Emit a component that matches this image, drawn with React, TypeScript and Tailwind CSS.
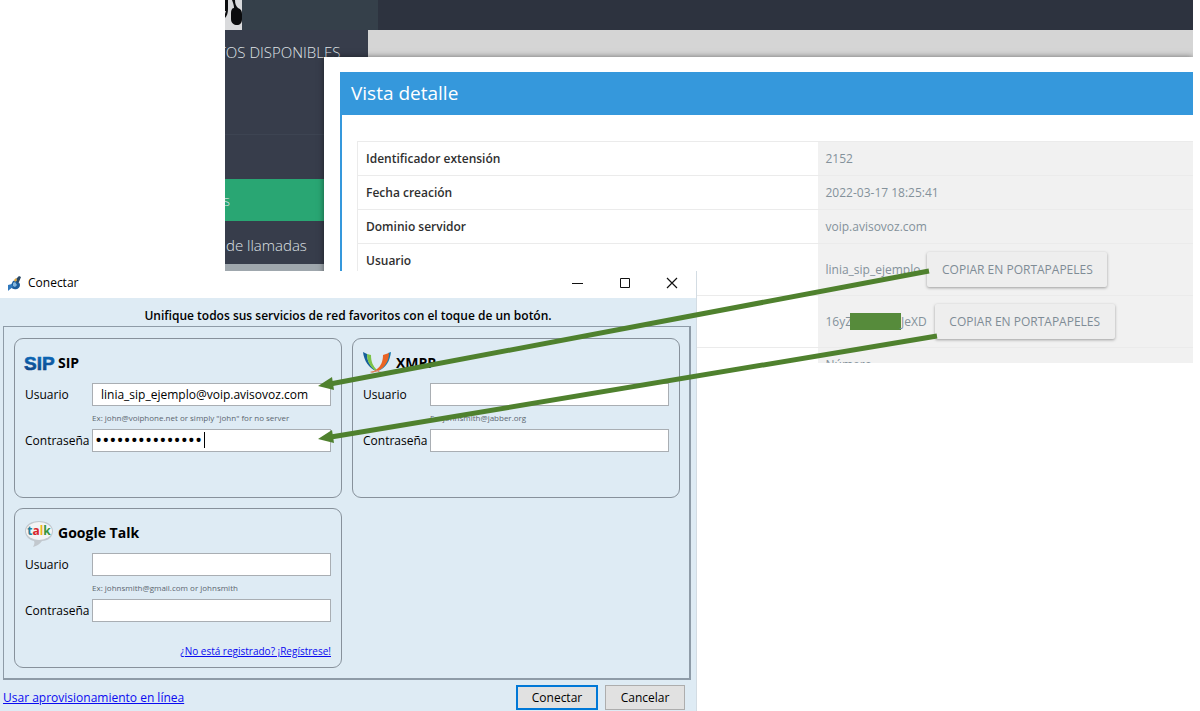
import React from 'react';

interface AccountProps {
  id: string;
  title: string;
  icon: React.ReactNode;
  hint: string;
  user?: string;
  password?: string;
  children?: React.ReactNode;
}

const inputClass = 'block w-full h-[23px] border border-[#a9aeb3] bg-white text-black focus:outline-none';

const Account: React.FC<AccountProps> = ({ id, title, icon, hint, user = '', password = '', children }) => (
  <section className="h-[160px] rounded-[9px] border border-[#87919b] px-[10px] pt-[10px]">
    <h2 className="flex h-[28px] items-center gap-[5px] text-sm font-bold">
      {icon}
      {title}
    </h2>
    <div className="mt-[6px] grid grid-cols-[67px_1fr] items-center">
      <label htmlFor={`${id}-user`}>Usuario</label>
      <input id={`${id}-user`} type="text" defaultValue={user} className={`${inputClass} px-2`} />
      <p className="col-start-2 h-[23px] pt-1 text-[8px] leading-4 text-[#5c6670]">{hint}</p>
      <label htmlFor={`${id}-pass`}>Contraseña</label>
      <div className="relative">
        <input id={`${id}-pass`} type="password" defaultValue={password} className={`${inputClass} px-[2px] text-[19px]`} />
        {password && <span className="absolute left-[112px] top-[3px] h-4 w-px bg-black"></span>}
      </div>
    </div>
    {children}
  </section>
);

const HeadsetPhoto = () => (
  <svg width="17" height="30" viewBox="0 0 17 30" className="block bg-[#d9dadc]">
    <path d="M0 0h3v9c0 4-1 7-3 9v-4l1-3H0z" fill="#0b0c0e" />
    <path d="M7 0h3c0 4 1 6 3 8 3 1 4 3 4 6v5c0 4-2 6-5 6s-6-2-6-6v-6c0-3 1-5 3-5C9 5 8 3 7 0z" fill="#0b0c0e" />
  </svg>
);

const AppIcon = () => (
  <svg width="14" height="16" viewBox="0 0 14 16">
    <path d="M5 6c3-1 7 1 7 4 0 3-3 5-6 4-2 0-3-2-3-4z" fill="#1d5d9c" />
    <path d="M0 10l4-1 1 3-4 3-1 1z" fill="#2f78bd" />
    <path d="M5 8l2-1 2 3-2 2-2-1z" fill="#83b6dd" />
    <path d="M8 4l3-3 2 1-2 5-2 1z" fill="#2c4a66" />
    <path d="M6 5l2-2 1 2-2 2z" fill="#e3a83d" />
  </svg>
);

const SipIcon = () => (
  <svg width="28" height="28" viewBox="0 0 28 28" className="overflow-visible">
    <defs>
      <linearGradient id="sip" x1="0" y1="0" x2="0" y2="1">
        <stop offset="0" stopColor="#0a6fc2" />
        <stop offset="1" stopColor="#123f7d" />
      </linearGradient>
    </defs>
    <text x="-1" y="21" fontSize="19" fontFamily="Liberation Sans, sans-serif" fill="url(#sip)" stroke="url(#sip)" strokeWidth="0.6">
      SIP
    </text>
  </svg>
);

const XmppIcon = () => (
  <svg width="28" height="28" viewBox="0 0 28 28">
    <path d="M0 3l4 2c0 7 3 12 9 17C6 19 1 12 0 3z" fill="#17609a" />
    <path d="M4 5l4 1c0 7 2 11 6 15l-1 1C7 18 4 12 4 5z" fill="#7cc348" />
    <path d="M28 3l-3 1c0 8-4 14-10 18 8-3 12-10 13-19z" fill="#177cb0" />
    <path d="M26 4l-6 2c0 6-2 11-6 14-2 2-4 2-7 3 2 1 5 0 8-1 7-4 11-10 11-18z" fill="#ea6424" />
    <path d="M7 23c3 0 5-1 7-2 2 1 3 2 5 2-2 1-4 0-5-1-2 1-4 2-7 1z" fill="#d98a74" />
  </svg>
);

const TalkIcon = () => (
  <svg width="28" height="28" viewBox="0 0 28 28">
    <path d="M14 2c8 0 14 4 14 10s-5 10-11 10c-2 3-5 5-9 6 1-2 2-4 1-6-5-1-9-5-9-10C0 6 6 2 14 2z" fill="#c2c8ce" />
    <ellipse cx="14" cy="12" rx="13" ry="9" fill="#f3f4f5" />
    <text x="14" y="16" textAnchor="middle" fontSize="12" fontWeight="bold" fontFamily="Open Sans, sans-serif"><tspan fill="#24819b">t</tspan><tspan fill="#d8262c">a</tspan><tspan fill="#f0b71c">l</tspan><tspan fill="#36953b">k</tspan></text>
  </svg>
);

const CopyButton = () => (
  <button
    type="button"
    className="h-[35px] w-[180px] rounded-[2px] bg-[#eeeeee] text-xs font-medium text-[#7f8c96] shadow-[0_1px_3px_rgba(0,0,0,0.35)]"
  >
    COPIAR EN PORTAPAPELES
  </button>
);

const rows: { label?: string; value: React.ReactNode; tall?: boolean }[] = [
  { label: 'Identificador extensión', value: '2152' },
  { label: 'Fecha creación', value: '2022-03-17 18:25:41' },
  { label: 'Dominio servidor', value: 'voip.avisovoz.com' },
  {
    label: 'Usuario',
    tall: true,
    value: (
      <>
        linia_sip_ejemplo
        <span className="ml-[7px]"><CopyButton /></span>
      </>
    ),
  },
  {
    tall: true,
    value: (
      <>
        16yZ
        <span className="-ml-[2px] h-[17px] w-[51px] bg-[#568b3b]"></span>
        JeXD
        <span className="ml-2"><CopyButton /></span>
      </>
    ),
  },
  { value: 'Número' },
];

const AdminPage = () => (
  <div className="relative ml-[225px] mr-[7px] h-[363px] overflow-hidden bg-[#d5d5d5]">
    <header className="flex h-[30px] bg-[#2d333f]">
      <div className="w-[153px] bg-[#35404a]">
        <HeadsetPhoto />
      </div>
    </header>
    <nav className="h-[234px] w-[143px] overflow-hidden bg-[#373d4b] text-[15px] font-light text-[#dfe2e6]">
      <p className="h-[105px] whitespace-nowrap border-b border-[#3d4452] pt-3 leading-5">
        <span className="-ml-[7px]">TOS DISPONIBLES</span>
      </p>
      <a href="#extensiones" className="mt-[44px] block h-[42px] bg-[#29a673] leading-[42px]">
        <span className="-ml-[2px]">s</span>
      </a>
      <a href="#llamadas" className="block h-[42px] pl-px leading-[48px]">de llamadas</a>
    </nav>
    <div className="h-[10px] w-[143px] bg-[#9fa7ad]"></div>

    <main className="absolute inset-0 left-[99px] top-[57px] bg-white pl-4 pt-[15px] shadow-[0_0_6px_rgba(0,0,0,0.5)]">
      <div className="h-full border-l-2 border-[#3598dc]">
        <h1 className="h-[43px] bg-[#3598dc] pl-[9px] text-[19px] font-medium leading-[43px] text-white">Vista detalle</h1>
        <table className="ml-[15px] mt-[26px] w-[calc(100%-15px)] border-collapse text-xs">
          <tbody>
            {rows.map((row, index) => (
              <tr key={index} className="border-t border-[#ebebeb]">
                <th scope="row" className="w-[460px] border-l border-[#ebebeb] px-2 pt-2 text-left align-top font-semibold leading-[17px] text-[#2f2f2f]">
                  {row.label}
                </th>
                <td className="bg-[#f1f1f1] px-2 text-[#84919b]">
                  <div className={row.tall ? 'flex h-[51px] items-center' : 'flex h-[33px] items-center'}>{row.value}</div>
                </td>
              </tr>
            ))}
          </tbody>
        </table>
      </div>
    </main>
  </div>
);

const ConnectDialog = () => (
  <div className="absolute left-0 top-[271px] flex h-[440px] w-[697px] flex-col border-r border-[#d3dce3] bg-[#deebf4] text-xs text-black">
    <div className="flex h-[27px] items-center bg-white pb-1 pl-2 pr-px">
      <AppIcon />
      <span className="ml-[6px]">Conectar</span>
      <div className="ml-auto flex">
        <button type="button" aria-label="Minimizar" className="flex h-5 w-[47px] items-center justify-center">
          <svg width="12" height="12" viewBox="0 0 12 12"><path d="M0 6.500h11" stroke="#111" /></svg>
        </button>
        <button type="button" aria-label="Maximizar" className="flex h-5 w-[47px] items-center justify-center">
          <svg width="12" height="12" viewBox="0 0 12 12"><path d="M1.500 1.500h9v9h-9z" fill="none" stroke="#111" /></svg>
        </button>
        <button type="button" aria-label="Cerrar" className="flex h-5 w-[47px] items-center justify-center">
          <svg width="12" height="12" viewBox="0 0 12 12"><path d="M1 1l10 10M11 1L1 11" stroke="#111" strokeWidth="1.2" /></svg>
        </button>
      </div>
    </div>
    <p className="h-[28px] pt-[9px] text-center font-semibold leading-[18px]">
      Unifique todos sus servicios de red favoritos con el toque de un botón.
    </p>
    <div className="ml-[3px] mr-[5px] grid h-[354px] grid-cols-2 content-start gap-[10px] border-2 border-l border-t border-[#8e9ba7] pl-[10px] pr-[9px] pt-[11px]">
      <Account
        id="sip"
        title="SIP"
        icon={<SipIcon />}
        hint={'Ex: john@voiphone.net or simply "john" for no server'}
        user="linia_sip_ejemplo@voip.avisovoz.com"
        password="123456789012345"
      />
      <Account id="xmpp" title="XMPP" icon={<XmppIcon />} hint="Ex: johnsmith@jabber.org" />
      <Account id="gtalk" title="Google Talk" icon={<TalkIcon />} hint="Ex: johnsmith@gmail.com or johnsmith">
        <a href="#registro" className="mt-[21px] block text-right text-[10px] leading-4 text-[#0a0af0] underline">
          ¿No está registrado? ¡Regístrese!
        </a>
      </Account>
    </div>
    <div className="flex items-center pl-[3px] pr-[11px] pt-[5px]">
      <a href="#linea" className="text-[#0a0af0] underline">Usar aprovisionamiento en línea</a>
      <button type="submit" className="ml-auto h-[25px] w-[82px] border-2 border-[#0078d7] bg-[#e1e1e1]">Conectar</button>
      <button type="button" className="ml-[7px] h-[25px] w-[80px] border border-[#adadad] bg-[#e1e1e1]">Cancelar</button>
    </div>
  </div>
);

const Arrows = () => (
  <svg width="1200" height="711" viewBox="0 0 1200 711" className="pointer-events-none absolute left-0 top-0" fill="#4f812e">
    <path d="M929 271L330 384M937 336L331 437" stroke="#4f812e" strokeWidth="5" />
    <path d="M318 386l14-9 2 13zM318 439l14-9 2 13z" />
  </svg>
);

const App: React.FC = () => (
  <div className="relative min-h-screen overflow-hidden bg-white font-['Open_Sans','Noto_Sans',sans-serif]">
    <AdminPage />
    <ConnectDialog />
    <Arrows />
  </div>
);

export default App;
